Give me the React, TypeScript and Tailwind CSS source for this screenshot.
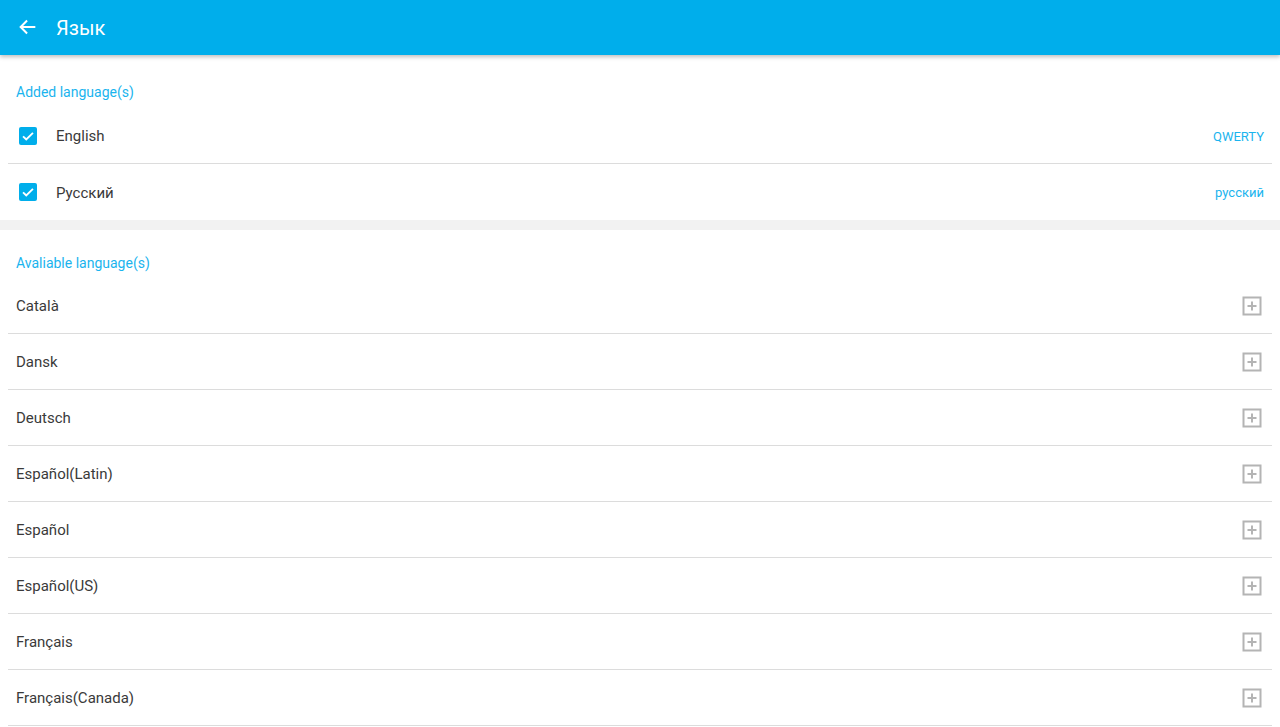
import React from "react";

const available = [
  "Català",
  "Dansk",
  "Deutsch",
  "Español(Latin)",
  "Español",
  "Español(US)",
  "Français",
  "Français(Canada)",
];

function Check() {
  return (
    <div className="w-[18px] h-[18px] rounded-[2px] bg-[#00aeeb] flex items-center justify-center">
      <svg width="14" height="14" viewBox="0 0 24 24" fill="none">
        <path d="M3.5 12.5l5.5 5.5L20.5 6.5" stroke="#fff" strokeWidth="3.2" />
      </svg>
    </div>
  );
}

function Plus() {
  return (
    <svg width="20" height="20" viewBox="0 0 20 20" fill="none">
      <rect x="1.5" y="1.5" width="17" height="17" stroke="#b4b4b4" strokeWidth="2" />
      <path d="M10 5.5v9M5.5 10h9" stroke="#b4b4b4" strokeWidth="2" />
    </svg>
  );
}

export default function App() {
  return (
    <div
      className="w-[1280px] h-[727px] overflow-hidden bg-white flex flex-col"
      style={{ fontFamily: "Roboto, 'Noto Sans', sans-serif" }}
    >
      <div className="h-[55px] shrink-0 bg-[#00aeeb] flex items-center shadow-[0_2px_4px_rgba(0,0,0,0.25)] relative z-10">
        <div className="w-[56px] flex items-center justify-center pb-[2px]">
          <svg width="22" height="22" viewBox="0 0 24 24" fill="none">
            <path d="M20 12H5M11 5l-7 7 7 7" stroke="#fff" strokeWidth="2.2" />
          </svg>
        </div>
        <span className="text-white text-[20px] pt-[1px]">Язык</span>
      </div>

      <div className="h-[53px] shrink-0 flex items-end pb-[5px] px-[16px]">
        <span className="text-[#1ab4ee] text-[14px]">Added language(s)</span>
      </div>
      <div className="px-[8px]">
        <div className="h-[56px] flex items-center border-b border-[#dcdcdc]">
          <div className="pl-[11px] mr-[19px]">
            <Check />
          </div>
          <span className="text-[15px] text-[#3a3a3a] flex-1 pt-[2px]">English</span>
          <span className="text-[13px] text-[#1ab4ee] pr-[8px] pt-[2px]">QWERTY</span>
        </div>
        <div className="h-[56px] flex items-center">
          <div className="pl-[11px] mr-[19px]">
            <Check />
          </div>
          <span className="text-[15px] text-[#3a3a3a] flex-1 pt-[2px]">Русский</span>
          <span className="text-[13px] text-[#1ab4ee] pr-[8px] pt-[2px]">русский</span>
        </div>
      </div>
      <div className="h-[10px] shrink-0 bg-[#f2f2f2]" />

      <div className="h-[48px] shrink-0 flex items-end pb-[4px] px-[16px]">
        <span className="text-[#1ab4ee] text-[14px]">Avaliable language(s)</span>
      </div>
      <div className="px-[8px]">
        {available.map((l) => (
          <div key={l} className="h-[56px] flex items-center border-b border-[#dcdcdc]">
            <span className="text-[15px] text-[#3a3a3a] flex-1 pl-[8px] pt-[2px]">{l}</span>
            <div className="pr-[10px] flex items-center">
              <Plus />
            </div>
          </div>
        ))}
      </div>
    </div>
  );
}
